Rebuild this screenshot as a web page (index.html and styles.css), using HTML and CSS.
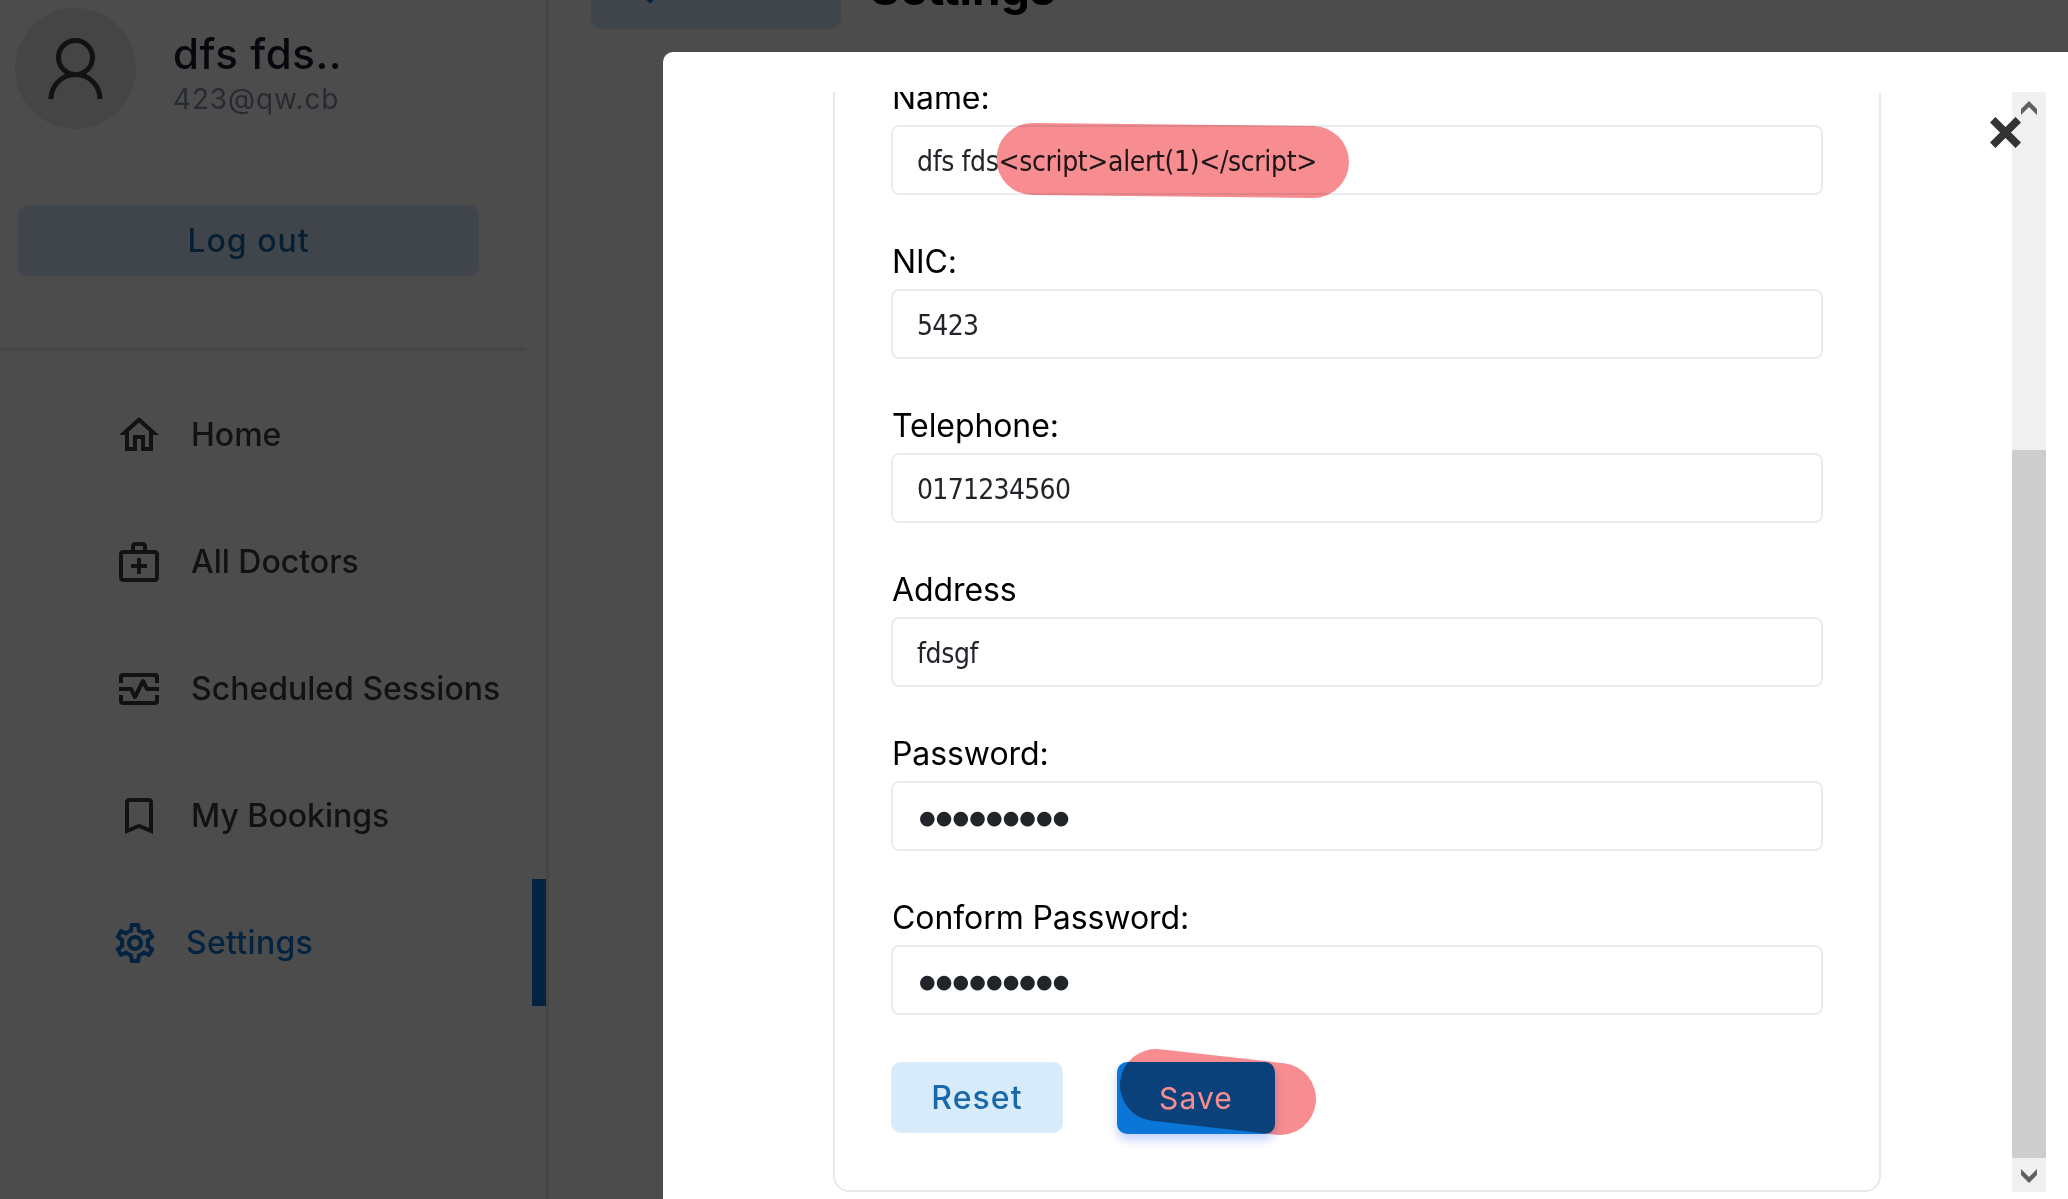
FILE: index.html
```html
<!DOCTYPE html>
<html lang="en">
<head>
<meta charset="utf-8">
<title>Settings</title>
<link rel="stylesheet" href="styles.css">
</head>
<body>
<aside class="sidebar">
  <div class="profile">
    <div class="avatar">
      <svg width="121" height="121" viewBox="0 0 121 121" fill="none" stroke="#3f3f3f" stroke-width="5"><circle cx="60.5" cy="49.5" r="17"/><path d="M36 91a24.5 24.5 0 0 1 49 0"/></svg>
    </div>
    <div class="who">
      <div class="who-name">dfs fds..</div>
      <div class="who-mail">423@qw.cb</div>
    </div>
  </div>
  <button class="logout">Log out</button>
  <div class="rule"></div>
  <nav class="menu">
    <a class="item"><svg viewBox="0 0 24 24"><path d="M12 5.69l5 4.5V18h-2v-6H9v6H7v-7.81l5-4.5M12 3L2 12h3v8h6v-6h2v6h6v-8h3L12 3z"/></svg><span>Home</span></a>
    <a class="item"><svg viewBox="0 0 24 24"><path d="M20 6h-4V4c0-1.100-.9-2-2-2h-4c-1.100 0-2 .9-2 2v2H4c-1.100 0-2 .9-2 2v12c0 1.100.9 2 2 2h16c1.100 0 2-.9 2-2V8c0-1.100-.9-2-2-2zM10 4h4v2h-4V4zm10 16H4V8h16v12z"/><path d="M13 10h-2v3H8v2h3v3h2v-3h3v-2h-3z"/></svg><span>All Doctors</span></a>
    <a class="item"><svg viewBox="0 0 24 24"><path d="M3 9V6a1 1 0 0 1 1-1h16a1 1 0 0 1 1 1v3M3 15v3a1 1 0 0 0 1 1h16a1 1 0 0 0 1-1v-3M2 12h6l2 4 4-8 2 4h6" fill="none" stroke="currentColor" stroke-width="2" stroke-linejoin="round"/></svg><span>Scheduled Sessions</span></a>
    <a class="item"><svg viewBox="0 0 24 24"><path d="M17 3H7c-1.100 0-2 .9-2 2v16l7-3 7 3V5c0-1.100-.9-2-2-2zm0 15l-5-2.180L7 18V5h10v13z"/></svg><span>My Bookings</span></a>
    <a class="item active"><svg viewBox="0 0 24 24"><path d="M19.430 12.980c.04-.32.07-.64.07-.98s-.03-.66-.07-.98l2.110-1.650c.19-.15.24-.42.12-.64l-2-3.460c-.09-.16-.26-.25-.44-.25-.06 0-.12.01-.17.03l-2.490 1c-.52-.4-1.080-.73-1.690-.98l-.38-2.650C14.460 2.180 14.250 2 14 2h-4c-.25 0-.46.18-.49.42l-.38 2.650c-.61.25-1.170.59-1.690.98l-2.490-1c-.06-.02-.12-.03-.18-.03-.17 0-.34.09-.43.25l-2 3.460c-.13.22-.07.49.12.64l2.110 1.650c-.04.32-.07.65-.07.98s.03.66.07.98l-2.110 1.650c-.19.15-.24.42-.12.64l2 3.460c.09.16.26.25.44.25.06 0 .12-.01.17-.03l2.490-1c.52.4 1.080.73 1.690.98l.38 2.650c.03.24.24.42.49.42h4c.25 0 .46-.18.49-.42l.38-2.650c.61-.25 1.170-.59 1.690-.98l2.490 1c.06.02.12.03.18.03.17 0 .34-.09.43-.25l2-3.460c.12-.22.07-.49-.12-.64l-2.110-1.650zm-1.980-1.710c.04.31.05.52.05.73 0 .21-.02.43-.05.73l-.14 1.130.89.7 1.080.84-.7 1.210-1.270-.51-1.040-.42-.9.68c-.43.32-.84.56-1.250.73l-1.060.43-.16 1.130-.2 1.350h-1.400l-.19-1.350-.16-1.130-1.060-.43c-.43-.18-.83-.41-1.230-.71l-.91-.7-1.060.43-1.270.51-.7-1.210 1.080-.84.89-.7-.14-1.130c-.03-.31-.05-.54-.05-.74s.02-.43.05-.73l.14-1.130-.89-.7-1.080-.84.7-1.210 1.270.51 1.040.42.9-.68c.43-.32.84-.56 1.250-.73l1.060-.43.16-1.130.2-1.350h1.390l.19 1.350.16 1.130 1.060.43c.43.18.83.41 1.230.71l.91.7 1.060-.43 1.270-.51.7 1.210-1.070.85-.89.7.14 1.130zM12 8c-2.210 0-4 1.790-4 4s1.790 4 4 4 4-1.790 4-4-1.790-4-4-4zm0 6c-1.100 0-2-.9-2-2s.9-2 2-2 2 .9 2 2-.9 2-2 2z"/></svg><span>Settings</span></a>
  </nav>
</aside>
<main class="page">
  <div class="back"><svg width="34" height="34" viewBox="0 0 34 34" fill="none" stroke="#0a76d8" stroke-width="5"><path d="M19 2L4 17l15 15M4 17h28"/></svg></div>
  <h1 class="title">Settings</h1>
</main>
<div class="overlay">
  <section class="modal">
    <div class="scroller">
      <form class="card">
        <label class="field"><span class="label">Name:</span><span class="input">dfs fds&lt;script&gt;alert(1)&lt;/script&gt;</span></label>
        <label class="field"><span class="label">NIC:</span><span class="input num">5423</span></label>
        <label class="field"><span class="label">Telephone:</span><span class="input num">0171234560</span></label>
        <label class="field"><span class="label">Address</span><span class="input">fdsgf</span></label>
        <label class="field"><span class="label">Password:</span><span class="input dots">●●●●●●●●●</span></label>
        <label class="field"><span class="label">Conform Password:</span><span class="input dots">●●●●●●●●●</span></label>
        <div class="actions"><button type="button" class="btn reset">Reset</button><button type="button" class="btn save">Save</button></div>
      </form>
      <div class="scrollbar">
        <svg width="34" height="34" viewBox="0 0 34 34"><path d="M17 9l8 8v6l-8-8-8 8v-6z" fill="#606060"/></svg>
        <div class="thumb"></div>
        <svg width="34" height="34" viewBox="0 0 34 34"><path d="M17 25l8-8v-6l-8 8-8-8v6z" fill="#606060"/></svg>
      </div>
    </div>
    <svg class="close" width="31" height="31" viewBox="0 0 31 31" stroke="#333" stroke-width="7.700"><path d="M2.700 2.700l25.600 25.600M28.300 2.700L2.700 28.300"/></svg>
  </section>
</div>
<svg class="marker" width="2068" height="1199" fill="none" stroke="#f78d90" stroke-width="72" stroke-linecap="round"><path d="M1032.500 159L1313 162"/><path d="M1156 1085L1280 1099"/></svg>
</body>
</html>
```
FILE: styles.css
```css
* { box-sizing: border-box; }
body {
  margin: 0;
  width: 2068px;
  height: 1199px;
  display: flex;
  position: relative;
  overflow: hidden;
  background: #fff;
  font-family: Inter, "Liberation Sans", sans-serif;
}
button { font: inherit; border: 0; padding: 0; }

.sidebar {
  width: 549px;
  height: 1199px;
  border-right: 3px solid #e6e6e6;
  padding-top: 8px;
}
.profile { display: flex; padding-left: 15px; gap: 37px; }
.avatar { width: 121px; height: 121px; border-radius: 50%; background: #e6e6e6; }
.avatar svg { display: block; }
.who { padding-top: 21px; white-space: nowrap; }
.who-name { font-size: 42px; line-height: 50px; font-weight: 500; letter-spacing: .6px; color: #161c2d; }
.who-mail { font-size: 28px; line-height: 40px; font-weight: 400; letter-spacing: .85px; color: #8492a6; }
.logout {
  display: block;
  width: 461px;
  height: 71px;
  margin: 76px 0 0 18px;
  border-radius: 10px;
  background: #d8e3fa;
  color: #1969aa;
  font-size: 32px;
  font-weight: 500;
  letter-spacing: 1px;
}
.rule { width: 526px; height: 3px; margin: 72px 0 20px; background: #e6e6e6; }
.item {
  display: flex;
  align-items: center;
  height: 127px;
  padding-left: 115px;
  gap: 28px;
  color: #3f3f3f;
  font-size: 32px;
  font-weight: 500;
  white-space: nowrap;
}
.item svg { width: 48px; height: 48px; fill: currentColor; flex: none; }
.item.active { padding-left: 111px; gap: 27px; letter-spacing: .3px; color: #0a76d8; border-right: 14px solid #0a76d8; }

.page { display: flex; padding-left: 42px; }
.back { width: 250px; height: 71px; margin-top: -42px; padding: 12px 0 0 42px; border-radius: 10px; background: #d8e3fa; }
.title { margin: -40px 0 0 29px; font-size: 46px; line-height: 56px; font-weight: 700; color: #000; }

.overlay {
  position: absolute;
  inset: 0;
  padding: 52px 0 0 663px;
  background: rgba(0, 0, 0, .7);
}
.modal { position: relative; height: 1160px; padding-top: 40px; border-radius: 10px 0 0 0; background: #fff; }
.scroller { display: flex; justify-content: space-between; height: 1100px; padding: 0 22px 0 170px; overflow: hidden; }
.card {
  width: 1048px;
  height: 1200px;
  margin-top: -100px;
  padding: 92px 56px 0;
  border: 2px solid #e9e9e9;
  border-radius: 16px;
}
.field { display: block; height: 164px; }
.label { display: block; height: 39px; padding-left: 1px; font-size: 32px; line-height: 24px; letter-spacing: -.08px; color: #000; white-space: nowrap; }
.input {
  display: block;
  height: 70px;
  padding: 1px 0 0 24px;
  border: 2px solid #e9ecef;
  border-radius: 8px;
  color: #212529;
  font-family: "DejaVu Sans Condensed", "DejaVu Sans", sans-serif;
  font-stretch: condensed;
  font-size: 28px;
  line-height: 67px;
  letter-spacing: -.35px;
  white-space: nowrap;
}
.input.num { letter-spacing: -.7px; }
.input.dots {
  padding: 0 0 0 26px;
  font-family: "DejaVu Sans", sans-serif;
  font-stretch: normal;
  font-size: 19px;
  line-height: 68px;
  letter-spacing: .15px;
}
.actions { display: flex; gap: 54px; margin-top: -8px; }
.btn { width: 172px; height: 71px; border-radius: 10px; font-size: 32px; font-weight: 500; letter-spacing: 1.1px; }
.reset { background: #d8ebfa; color: #1969aa; }
.save {
  width: 158px;
  height: 72px;
  background: #0a76d8;
  color: #fff;
  font-size: 30px;
  font-weight: 400;
  box-shadow: 0 6px 10px rgba(57, 108, 240, .3);
}
.scrollbar { display: flex; flex-direction: column; width: 34px; background: #f0f0f0; }
.scrollbar svg { display: block; flex: none; }
.thumb { height: 708px; margin-top: auto; background: #cdcdcd; }
.close { position: absolute; left: 1327px; top: 65px; }
.marker { position: absolute; left: 0; top: 0; mix-blend-mode: multiply; pointer-events: none; }
```
